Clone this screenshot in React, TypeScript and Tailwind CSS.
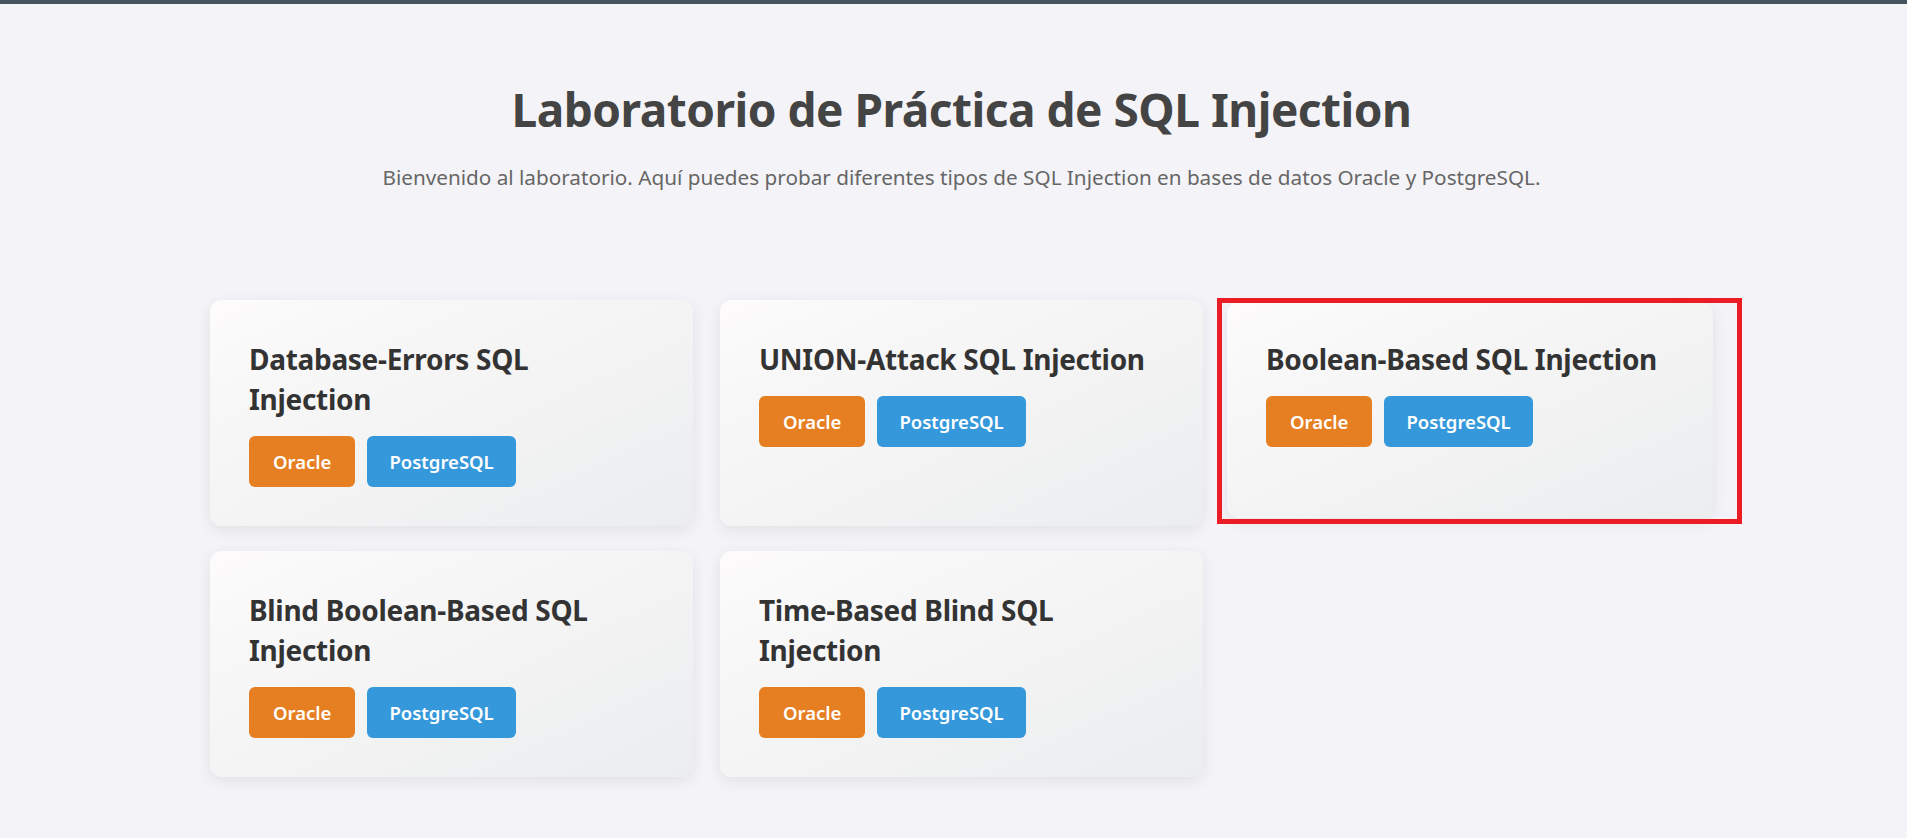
import React from 'react';

const LABS = [
  { title: 'Database-Errors SQL Injection', highlight: false },
  { title: 'UNION-Attack SQL Injection', highlight: false },
  { title: 'Boolean-Based SQL Injection', highlight: true },
  { title: 'Blind Boolean-Based SQL Injection', highlight: false },
  { title: 'Time-Based Blind SQL Injection', highlight: false },
];

function LabCard({ title, className = '' }: { title: string; className?: string }) {
  return (
    <div
      className={`rounded-[12px] bg-gradient-to-br from-[#fdfbfb] to-[#ebedee] p-[39px] shadow-[0_4px_15px_rgba(0,0,0,0.08)] ${className}`}
    >
      <h2 className="mb-[17px] text-[28px] font-bold leading-[40px] tracking-[-0.3px] text-[#333333]">{title}</h2>
      <div className="flex gap-[12px]">
        <button className="rounded-[6px] bg-[#e67e22] px-[24px] py-[12.5px] text-[18.5px] font-semibold leading-[26px] text-white">
          Oracle
        </button>
        <button className="rounded-[6px] bg-[#3498db] px-[22px] py-[12.5px] text-[18.5px] font-semibold leading-[26px] text-white">
          PostgreSQL
        </button>
      </div>
    </div>
  );
}

export default function App() {
  return (
    <div className="min-h-screen bg-[#f4f4f8] font-['Noto_Sans',sans-serif]">
      {/* top bar */}
      <div className="h-[4px] bg-[#45535f]" />

      <div className="pl-[16px]">
        <div className="text-center">
          <h1 className="mt-[73px] text-[46px] font-bold leading-[64px] tracking-[-0.5px] text-[#444444]">
            Laboratorio de Práctica de SQL Injection
          </h1>
          <p className="mt-[22px] text-[20.7px] leading-[28px] text-[#666666]">
            Bienvenido al laboratorio. Aquí puedes probar diferentes tipos de SQL Injection en bases de datos Oracle y PostgreSQL.
          </p>
        </div>

        <div className="mx-auto mt-[109px] grid w-[1503px] grid-cols-3 gap-x-[27px] gap-y-[25px] pb-10">
          {LABS.map(lab =>
            lab.highlight ? (
              <div key={lab.title} className="relative flex">
                <LabCard title={lab.title} className="mt-[2px] mb-[8px] -ml-[3px] flex-1 pt-[37px]" />
                {/* red highlight frame */}
                <div className="pointer-events-none absolute -left-[13px] -top-[2px] h-[226px] w-[525px] border-[5px] border-[#ec1c24]" />
              </div>
            ) : (
              <LabCard key={lab.title} title={lab.title} />
            )
          )}
        </div>
      </div>
    </div>
  );
}
